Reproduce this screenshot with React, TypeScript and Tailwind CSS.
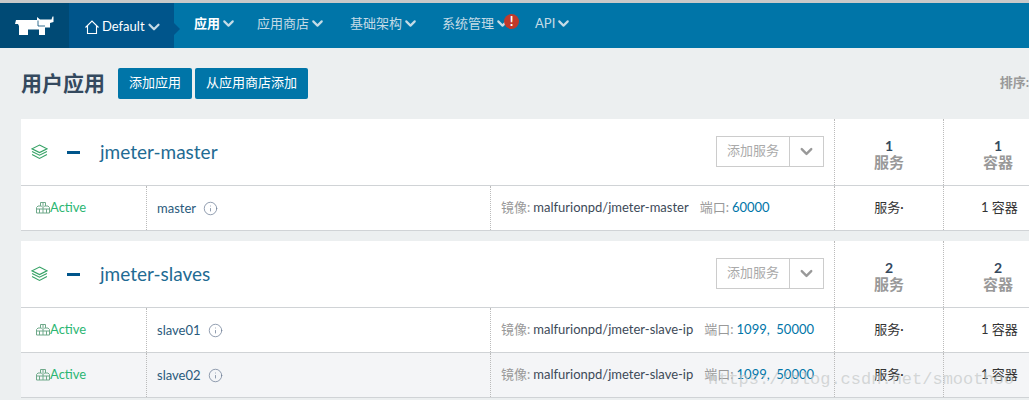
import { ChevronDown, Info } from "lucide-react";

const font = "font-['Lato','Noto_Sans_CJK_SC',sans-serif]";

const navItems = [
  { label: "应用", active: true },
  { label: "应用商店" },
  { label: "基础架构" },
  { label: "系统管理", alert: true },
  { label: "API" },
];

type Row = { name: string; image: string; port: string; striped?: boolean };

const stacks: { name: string; count: number; rows: Row[] }[] = [
  {
    name: "jmeter-master",
    count: 1,
    rows: [{ name: "master", image: "malfurionpd/jmeter-master", port: "60000" }],
  },
  {
    name: "jmeter-slaves",
    count: 2,
    rows: [
      { name: "slave01", image: "malfurionpd/jmeter-slave-ip", port: "1099,  50000" },
      { name: "slave02", image: "malfurionpd/jmeter-slave-ip", port: "1099,  50000", striped: true },
    ],
  },
];

function Logo() {
  return (
    <svg width="40" height="20" viewBox="0 0 40 20" fill="#fff">
      <path d="M1 4H22V1L25 3.5H33L36.5 3.5L37.5 0.5H38.5V6L35 7V11.5H30V19H24V13.5H13V19H4V10L3 8H0Z" />
      <path d="M23 4.5V10H30" fill="none" stroke="#004a75" strokeWidth="0.8" />
    </svg>
  );
}

function HouseIcon() {
  return (
    <svg width="14" height="14" viewBox="0 0 14 14" fill="none" stroke="#fff" strokeWidth="1.1">
      <path d="M0.5 7.5L7 1L13.5 7.5M2.5 6V13.5H11.5V6" />
    </svg>
  );
}

function LayersIcon() {
  return (
    <svg width="17" height="16" viewBox="0 0 16 15" fill="none" stroke="#35a265" strokeWidth="1">
      <path d="M8 1L15 4.5L8 8L1 4.5Z" />
      <path d="M1 7L8 10.5L15 7" />
      <path d="M1 9.8L8 13.5L15 9.8" />
    </svg>
  );
}

function CubesIcon() {
  return (
    <svg width="14" height="13" viewBox="0 0 14 13" fill="none" stroke="#6fa98a" strokeWidth="1">
      <path d="M4.5 5V1.5H9.5V5" />
      <path d="M7 1.5V5" />
      <path d="M0.5 12V6.5L2 5H5.5L7 6.5V12ZM7 6.5L8.5 5H12L13.5 6.5V12H7" />
      <path d="M0.5 8H7H13.5M3.5 8V12M10.5 8V12" />
    </svg>
  );
}

function Nav() {
  return (
    <nav className="flex h-[45px] bg-[#0075a8] text-[13px] text-[#c5dbe6]">
      <div className="flex w-[69px] items-center justify-center bg-[#004a75]">
        <Logo />
      </div>
      <div className="relative flex w-[105px] items-center bg-[#00558b] pl-[16px] pt-[2px] text-white">
        <HouseIcon />
        <span className="ml-[3px]">Default</span>
        <ChevronDown size={18} strokeWidth={3} className="text-[#c5dbe6]" />
        <div className="absolute right-[-6px] top-[20px] size-0 border-y-[6px] border-l-[6px] border-y-transparent border-l-[#00558b]" />
      </div>
      <div className="flex items-center gap-[24px] pb-[4px] pl-[20px]">
        {navItems.map((item) => (
          <div
            key={item.label}
            className={`relative flex items-center ${item.active ? "mr-[-4px] font-bold text-white" : ""} ${item.alert ? "ml-[-1px]" : ""}`}
          >
            <span>{item.label}</span>
            <ChevronDown size={17} strokeWidth={3} className="text-[#c5dbe6]" />
            {item.alert && (
              <span className="absolute right-[-8px] top-[0px] flex size-[15px] items-center justify-center rounded-full bg-[#c0392b] text-[13px] font-bold leading-none text-white">
                !
              </span>
            )}
          </div>
        ))}
      </div>
    </nav>
  );
}

function StackRow({ row }: { row: Row }) {
  return (
    <div className={`grid h-[45px] grid-cols-[125px_344px_344px_109px_1fr] border-b border-[#d0d3d6] text-[13px] ${row.striped ? "bg-[#f4f5f7]" : ""}`}>
      <div className="flex items-center pb-[1px] pl-[15px] text-[#2bb673]">
        <CubesIcon />
        <span>Active</span>
      </div>
      <div className="flex items-center gap-[7px] border-l border-dotted border-[#bbb] pl-[10px] pt-[1px] text-[#2a5a7c]">
        <span>{row.name}</span>
        <Info size={15} strokeWidth={1.2} className="text-[#6f7f97]" />
      </div>
      <div className="flex items-center border-l border-dotted border-[#bbb] pl-[10px] text-[#3d4a58]">
        <span className="text-[#999]">镜像:</span>
        <span className="ml-[3px]">{row.image}</span>
        <span className="ml-[11px] text-[#999]">端口:</span>
        <span className="ml-[3px] whitespace-pre text-[#0075a8]">{row.port}</span>
      </div>
      <div className="flex items-center justify-center border-l border-dotted border-[#bbb] text-[#333]">服务·</div>
      <div className="flex items-center border-l border-dotted border-[#bbb] pl-[37px] text-[#333]">1 容器</div>
    </div>
  );
}

function Stat({ count, label }: { count: number; label: string }) {
  return (
    <div className="flex w-[109px] flex-col items-center justify-center border-l border-dotted border-[#bbb] pt-[4px] font-bold leading-[16px]">
      <span className="text-[14px] text-[#34495e]">{count}</span>
      <span className="text-[15px] text-[#999]">{label}</span>
    </div>
  );
}

function Stack({ stack }: { stack: (typeof stacks)[number] }) {
  return (
    <section className="w-[1060px] bg-white">
      <div className="flex h-[67px] border-b border-[#d0d3d6]">
        <div className="flex w-[813px] items-center pl-[10px]">
          <LayersIcon />
          <span className="ml-[19px] h-[3px] w-[13px] bg-[#00558b]" />
          <h2 className="ml-[20px] text-[19px] text-[#1f6b93]">{stack.name}</h2>
          <div className="mb-[2px] ml-auto mr-[10px] flex h-[31px] items-center border border-[#ccc] text-[13px] text-[#aaa]">
            <span className="flex h-full w-[72px] items-center justify-center">添加服务</span>
            <span className="flex h-full w-[34px] items-center justify-center border-l border-[#ccc]">
              <ChevronDown size={19} strokeWidth={3} className="text-[#999]" />
            </span>
          </div>
        </div>
        <Stat count={stack.count} label="服务" />
        <Stat count={stack.count} label="容器" />
      </div>
      {stack.rows.map((row) => (
        <StackRow key={row.name} row={row} />
      ))}
    </section>
  );
}

export default function App() {
  return (
    <div className={`relative h-[400px] w-[1029px] overflow-hidden bg-[#eceff0] ${font}`}>
      <div className="h-[3px] bg-[#c9c9c9]" />
      <Nav />
      <div className="flex h-[71px] items-center pb-[1px] pl-[21px]">
        <h1 className="text-[21px] font-bold text-[#34495e]">用户应用</h1>
        <button className="ml-[13px] h-[31px] w-[74px] rounded-[2px] bg-[#0075a8] text-[13px] text-white">添加应用</button>
        <button className="ml-[3px] h-[31px] w-[113px] rounded-[2px] bg-[#0075a8] text-[13px] text-white">从应用商店添加</button>
        <span className="ml-auto whitespace-nowrap text-[13px] font-bold text-[#999]">排序:</span>
      </div>
      <div className="flex flex-col gap-[10px] pl-[21px]">
        {stacks.map((stack) => (
          <Stack key={stack.name} stack={stack} />
        ))}
      </div>
      {/* watermark over the last row */}
      <span className="absolute left-[708px] top-[367px] font-['Liberation_Mono',monospace] text-[17px] text-[#c4c8c8]/70">
        https://blog.csdn.net/smoothoo
      </span>
    </div>
  );
}
